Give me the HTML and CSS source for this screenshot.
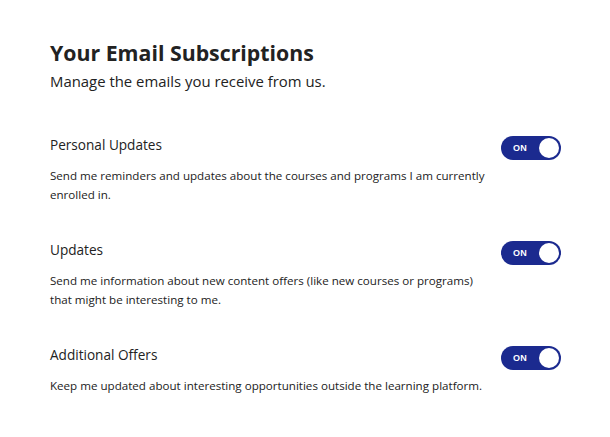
FILE: index.html
```html
<!DOCTYPE html>
<html lang="en">
<head>
<meta charset="utf-8">
<title>Your Email Subscriptions</title>
<link rel="stylesheet" href="styles.css">
</head>
<body>
<main class="page">
  <h1 class="title">Your Email Subscriptions</h1>
  <p class="subtitle">Manage the emails you receive from us.</p>
  <ul class="list">
    <li class="item">
      <div class="item-head">
        <h2 class="item-title">Personal Updates</h2>
        <button class="toggle" type="button" aria-pressed="true"><span class="toggle-label">ON</span><span class="knob"></span></button>
      </div>
      <p class="item-desc">Send me reminders and updates about the courses and programs I am currently enrolled in.</p>
    </li>
    <li class="item">
      <div class="item-head">
        <h2 class="item-title">Updates</h2>
        <button class="toggle" type="button" aria-pressed="true"><span class="toggle-label">ON</span><span class="knob"></span></button>
      </div>
      <p class="item-desc">Send me information about new content offers (like new courses or programs) that might be interesting to me.</p>
    </li>
    <li class="item">
      <div class="item-head">
        <h2 class="item-title">Additional Offers</h2>
        <button class="toggle" type="button" aria-pressed="true"><span class="toggle-label">ON</span><span class="knob"></span></button>
      </div>
      <p class="item-desc">Keep me updated about interesting opportunities outside the learning platform.</p>
    </li>
  </ul>
</main>
</body>
</html>
```

FILE: styles.css
```css
html, body {
  margin: 0;
  padding: 0;
  background: #ffffff;
}

body {
  font-family: "Open Sans", "Noto Sans", sans-serif;
  color: #222222;
}

.page {
  padding: 39px 49px 0 50px;
}

.title {
  margin: 0;
  font-size: 21.3px;
  line-height: 28px;
  font-weight: 700;
  color: #222222;
}

.subtitle {
  margin: 4px 0 0 0;
  font-size: 14.9px;
  line-height: 20px;
  color: #222222;
}

.list {
  list-style: none;
  margin: 45px 0 0 0;
  padding: 0;
  display: flex;
  flex-direction: column;
  gap: 37px;
}

.item-head {
  display: flex;
  justify-content: space-between;
  align-items: flex-start;
}

.item-title {
  margin: 0;
  font-size: 13.6px;
  line-height: 18px;
  font-weight: 500;
  color: #222222;
}

.item-desc {
  margin: 6px 0 0 0;
  font-size: 11.6px;
  line-height: 19px;
  max-width: 436px;
  color: #222222;
}

.toggle {
  display: flex;
  align-items: center;
  justify-content: space-between;
  width: 60px;
  height: 24px;
  padding: 0 2px 0 12px;
  margin: 0;
  border: none;
  border-radius: 12px;
  background: #1b2a8f;
  box-sizing: border-box;
  cursor: pointer;
}

.toggle-label {
  font-family: "Liberation Sans", Arial, sans-serif;
  font-size: 9px;
  font-weight: 700;
  color: #ffffff;
  letter-spacing: 0.2px;
}

.knob {
  width: 20px;
  height: 20px;
  border-radius: 50%;
  background: #ffffff;
}
```
